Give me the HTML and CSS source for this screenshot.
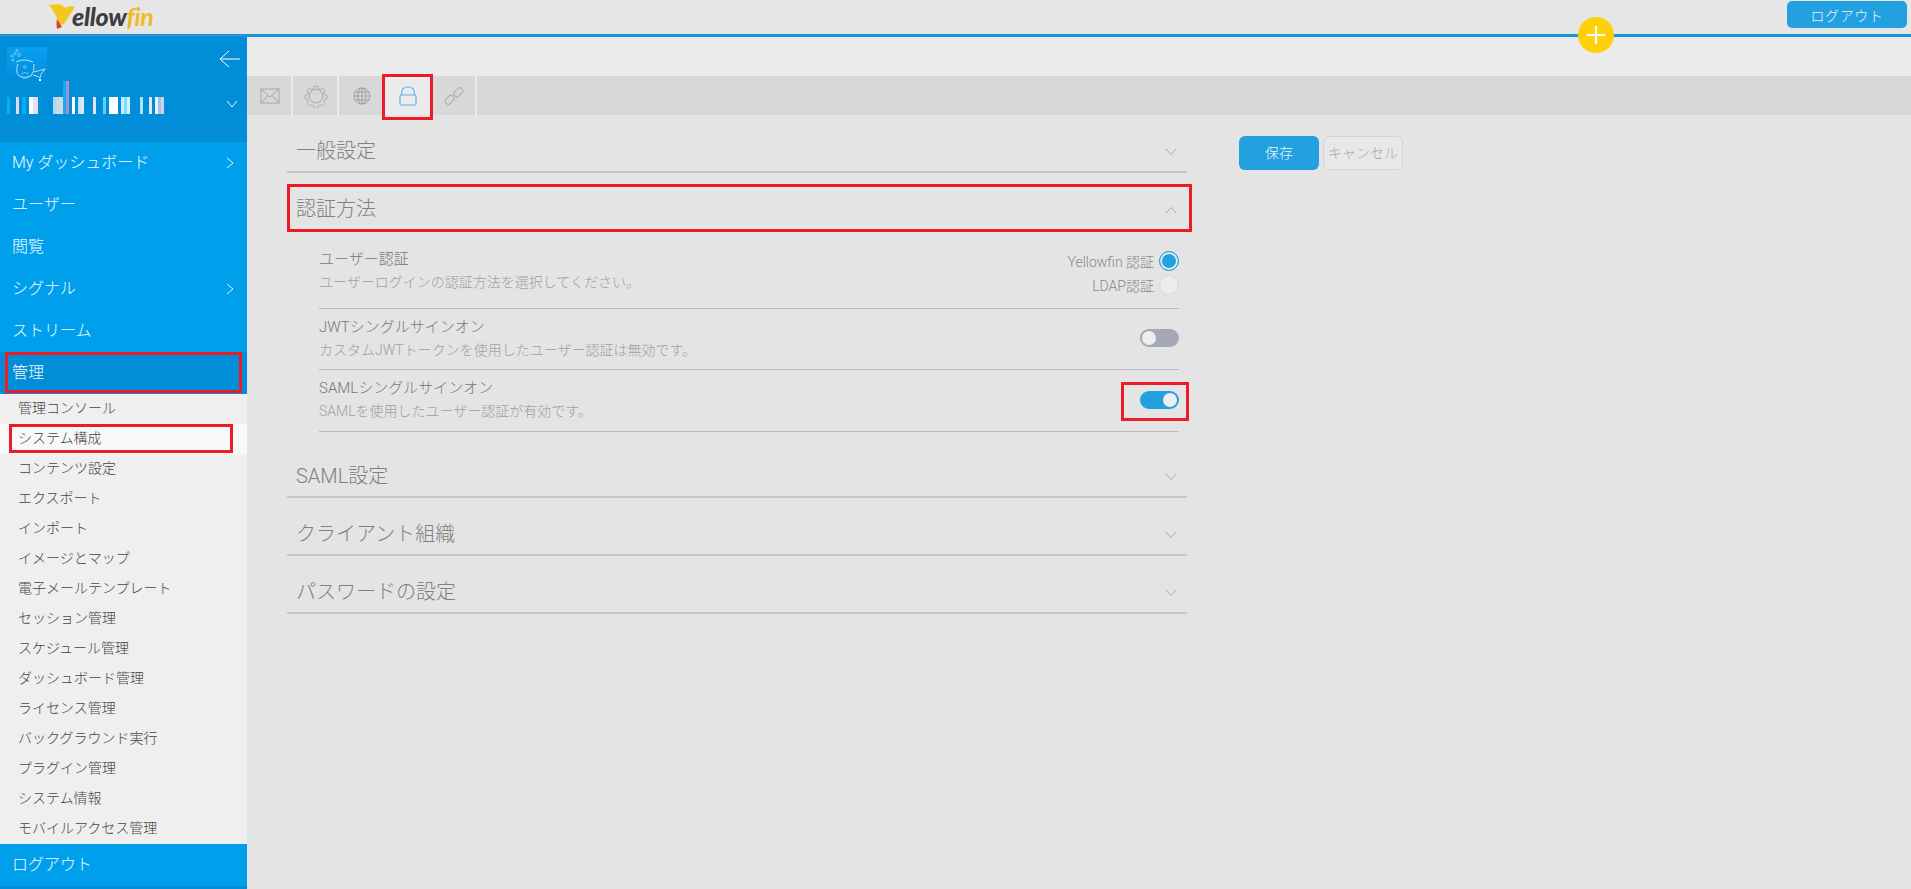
FILE: index.html
```html
<!DOCTYPE html>
<html lang="ja">
<head>
<meta charset="utf-8">
<title>システム構成</title>
<link rel="stylesheet" href="styles.css">
</head>
<body>
<header class="topbar">
  <div class="logo">
    <svg class="logo-mark" width="26" height="26" viewBox="0 0 26 26"><path fill="#f2c81e" d="M1 3 L11 2 Q15 3 17 6 Q21 3 27 5 L16 22 L11 23 Q9 13 1 3Z"/><path fill="#e2383a" d="M9 17 L14 25 L9 27 Q8 21 9 17Z"/></svg>
    <span class="logo-text">ellow<span class="logo-fin">fin</span></span>
  </div>
  <button class="logout-top">ログアウト</button>
  <div class="fab"><svg width="20" height="20" viewBox="0 0 20 20"><path d="M10 1V19M1 10H19" stroke="#fff" stroke-width="2.2"/></svg></div>
</header>
<div class="body-row">
  <aside class="sidebar">
    <div class="profile">
      <svg class="avatar" width="40" height="34" viewBox="0 0 40 34">
        <g fill="none" stroke="#9fd6fa" stroke-width=".7">
          <circle cx="10" cy="3.5" r="1.1"/><circle cx="12" cy="8" r="1.5"/><circle cx="8" cy="6.5" r="1"/><circle cx="5" cy="9" r="1.1"/><circle cx="6" cy="13" r="1"/>
          <path d="M9 15Q17 11 26 15M11 17Q8 24 12 29Q18 32 24 29Q28 24 27 17" stroke="#c4e8ff" stroke-width=".9"/>
          <path d="M27 25Q31 24 38 22Q33 27 33 31Q29 28 26 28" stroke="#c4e8ff" stroke-width=".9"/>
          <circle cx="18" cy="20" r="1.3"/><path d="M14 27Q18 24 22 27M15 31H21"/>
        </g>
        <rect x="32" y="32" width="2" height="2" fill="#fff"/>
      </svg>
      <svg class="back-arrow" width="22" height="18" viewBox="0 0 22 18"><path d="M21 9H1M10 1L1 9L10 17" fill="none" stroke="#fff" stroke-width="1"/></svg>
      <svg class="name-bars" width="170" height="33" viewBox="0 0 170 33">
        <rect x="7" y="16" width="3" height="17" fill="#00b4f0"/><rect x="16" y="16" width="3" height="17" fill="#d8dde8"/><rect x="22" y="16" width="4" height="17" fill="#00b0f0"/><rect x="29" y="16" width="4" height="17" fill="#fff"/><rect x="33" y="16" width="5" height="17" fill="#e0e3ea"/>
        <rect x="53" y="16" width="3" height="17" fill="#a8dcf5"/><rect x="56" y="16" width="3" height="17" fill="#c8d8e8"/><rect x="59" y="16" width="4" height="17" fill="#d4d8e0"/><rect x="63" y="0" width="3" height="33" fill="#0cb0f0"/><rect x="66" y="0" width="3" height="33" fill="#a890d0"/>
        <rect x="72" y="16" width="3" height="17" fill="#fff"/><rect x="78" y="16" width="3" height="17" fill="#bfe4f5"/><rect x="81" y="16" width="3" height="17" fill="#e0e8f0"/><rect x="93" y="16" width="3" height="17" fill="#e0e4ec"/><rect x="103" y="16" width="3" height="17" fill="#60d0ff"/><rect x="109" y="16" width="9" height="17" fill="#fff"/>
        <rect x="121" y="16" width="3" height="17" fill="#c8eafa"/><rect x="124" y="16" width="3" height="17" fill="#80dcff"/><rect x="127" y="16" width="3" height="17" fill="#d8f0fa"/><rect x="140" y="16" width="3" height="17" fill="#a8e4fa"/><rect x="149" y="16" width="3" height="17" fill="#e4e6ee"/><rect x="155" y="16" width="3" height="17" fill="#e8f4fc"/><rect x="158" y="16" width="3" height="17" fill="#a8c0e8"/><rect x="161" y="16" width="3" height="17" fill="#d0d4e0"/>
      </svg>
      <svg class="profile-chevron" width="12" height="8" viewBox="0 0 12 8"><path d="M1 1L6 7L11 1" fill="none" stroke="#e6f5ff" stroke-width="1"/></svg>
    </div>
    <nav class="menu">
      <a class="menu-item">My ダッシュボード<svg width="8" height="12" viewBox="0 0 8 12"><path d="M1 1L7 6L1 11" fill="none" stroke="#e6f5ff" stroke-width="1"/></svg></a>
      <a class="menu-item">ユーザー</a>
      <a class="menu-item">閲覧</a>
      <a class="menu-item">シグナル<svg width="8" height="12" viewBox="0 0 8 12"><path d="M1 1L7 6L1 11" fill="none" stroke="#e6f5ff" stroke-width="1"/></svg></a>
      <a class="menu-item">ストリーム</a>
      <a class="menu-item menu-active mark mark-admin">管理</a>
      <div class="submenu">
        <a class="sub-item">管理コンソール</a>
        <a class="sub-item sub-current mark mark-sub">システム構成</a>
        <a class="sub-item">コンテンツ設定</a>
        <a class="sub-item">エクスポート</a>
        <a class="sub-item">インポート</a>
        <a class="sub-item">イメージとマップ</a>
        <a class="sub-item">電子メールテンプレート</a>
        <a class="sub-item">セッション管理</a>
        <a class="sub-item">スケジュール管理</a>
        <a class="sub-item">ダッシュボード管理</a>
        <a class="sub-item">ライセンス管理</a>
        <a class="sub-item">バックグラウンド実行</a>
        <a class="sub-item">プラグイン管理</a>
        <a class="sub-item">システム情報</a>
        <a class="sub-item">モバイルアクセス管理</a>
      </div>
      <a class="menu-item">ログアウト</a>
    </nav>
  </aside>
  <main class="main">
    <div class="strip"></div>
    <div class="tabs">
      <div class="tab"><svg width="20" height="16" viewBox="0 0 20 16"><g fill="none" stroke="#a6a6a6" stroke-width="1"><rect x="1" y="1" width="18" height="14"/><path d="M1 1L10 9L19 1M1 15L8 7.5M19 15L12 7.5"/></g></svg></div>
      <div class="tab"><svg width="24" height="24" viewBox="0 0 24 24"><g fill="none" stroke="#a6a6a6" stroke-width="1"><circle cx="12" cy="12" r="6.8"/><path d="M10.2 1.5h3.6l.8 2.8 2.4 1 2.6-1.4 2.6 2.6-1.4 2.6 1 2.4 2.8.8v3.6l-2.8.8-1 2.4 1.4 2.6-2.6 2.6-2.6-1.4-2.4 1-.8 2.8h-3.6l-.8-2.8-2.4-1-2.6 1.4-2.6-2.6 1.4-2.6-1-2.4-2.8-.8v-3.6l2.8-.8 1-2.4-1.4-2.6 2.6-2.6 2.6 1.4 2.4-1z" transform="translate(1.6 .9) scale(.87)"/></g></svg></div>
      <div class="tab"><svg width="20" height="20" viewBox="0 0 20 20"><g fill="none" stroke="#a0a0a0" stroke-width="1"><circle cx="10" cy="10" r="8"/><ellipse cx="10" cy="10" rx="4" ry="8"/><path d="M10 2V18M2 10H18M3.2 6H16.8M3.2 14H16.8"/></g></svg></div>
      <div class="tab tab-active mark mark-tab"><svg width="18" height="20" viewBox="0 0 18 20"><g fill="none" stroke="#5ab4ea" stroke-width="1.2"><path d="M2.5 9V7.5Q2.5 1 9 1Q15.5 1 15.5 7.5V9"/><rect x="1" y="9" width="16" height="10" rx="1.5"/></g></svg></div>
      <div class="tab"><svg width="20" height="20" viewBox="0 0 20 20"><g fill="none" stroke="#b0b0b0" stroke-width="1.1"><rect x="8.5" y="1.8" width="10" height="6" rx="3" transform="rotate(-45 13.5 4.8) translate(-.4 1.6)"/><rect x="1.5" y="12.2" width="10" height="6" rx="3" transform="rotate(-45 6.5 15.2) translate(.4 -1.6)"/></g></svg></div>
    </div>
    <div class="content">
      <div class="accordion">
        <section>
          <div class="acc-head"><span>一般設定</span><svg class="chev" width="14" height="8" viewBox="0 0 14 8"><path d="M2 1L7 6.5L12 1"/></svg></div>
        </section>
        <section class="open">
          <div class="acc-head mark mark-head"><span>認証方法</span><svg class="chev" width="14" height="8" viewBox="0 0 14 8"><path d="M2 7L7 1.5L12 7"/></svg></div>
          <div class="rows">
            <div class="row row-radio">
              <div class="row-text"><div class="row-title">ユーザー認証</div><div class="row-desc">ユーザーログインの認証方法を選択してください。</div></div>
              <div class="radios">
                <label class="radio-line">Yellowfin 認証<i class="radio on"></i></label>
                <label class="radio-line">LDAP認証<i class="radio"></i></label>
              </div>
            </div>
            <div class="row">
              <div class="row-text"><div class="row-title">JWTシングルサインオン</div><div class="row-desc">カスタムJWTトークンを使用したユーザー認証は無効です。</div></div>
              <i class="toggle"></i>
            </div>
            <div class="row row-last">
              <div class="row-text"><div class="row-title">SAMLシングルサインオン</div><div class="row-desc">SAMLを使用したユーザー認証が有効です。</div></div>
              <i class="toggle toggle-on mark mark-toggle"></i>
            </div>
          </div>
        </section>
        <section>
          <div class="acc-head"><span>SAML設定</span><svg class="chev" width="14" height="8" viewBox="0 0 14 8"><path d="M2 1L7 6.5L12 1"/></svg></div>
        </section>
        <section>
          <div class="acc-head"><span>クライアント組織</span><svg class="chev" width="14" height="8" viewBox="0 0 14 8"><path d="M2 1L7 6.5L12 1"/></svg></div>
        </section>
        <section>
          <div class="acc-head"><span>パスワードの設定</span><svg class="chev" width="14" height="8" viewBox="0 0 14 8"><path d="M2 1L7 6.5L12 1"/></svg></div>
        </section>
      </div>
      <div class="actions">
        <button class="btn btn-save">保存</button>
        <button class="btn btn-cancel">キャンセル</button>
      </div>
    </div>
  </main>
</div>
</body>
</html>
```
FILE: styles.css
```css
* { box-sizing: border-box; }
html, body { margin: 0; height: 100%; overflow: hidden; }
body {
  width: 1911px;
  height: 889px;
  display: flex;
  flex-direction: column;
  background: #e4e4e4;
  font-family: Roboto, "Noto Sans CJK JP", sans-serif;
  font-weight: 300;
}
.topbar {
  position: relative;
  flex: 0 0 37px;
  display: flex;
  justify-content: space-between;
  align-items: flex-start;
  background: #e6e6e6;
  border-bottom: 3px solid #1c94d6;
  padding: 1px 4px 0 48px;
}
.logo { display: flex; align-items: flex-start; height: 32px; }
.logo-mark { overflow: visible; margin-top: 1px; margin-right: -2px; }
.logo-text {
  font-family: Lato, sans-serif;
  font-weight: 900;
  font-style: italic;
  font-size: 25px;
  line-height: 30px;
  color: #3d3d40;
  letter-spacing: -.3px;
}
.logo-fin { color: #efba1f; font-weight: 700; }
.logout-top {
  width: 120px;
  height: 27px;
  border: 0;
  border-radius: 5px;
  background: #22a0e0;
  color: #e8f4fc;
  font: 300 14px Roboto, "Noto Sans CJK JP", sans-serif;
  letter-spacing: .6px;
}
.fab {
  position: absolute;
  left: 1578px;
  top: 17px;
  width: 36px;
  height: 36px;
  border-radius: 50%;
  background: #ffd008;
  display: flex;
  align-items: center;
  justify-content: center;
  z-index: 5;
}
.body-row { flex: 1; display: flex; min-height: 0; }

/* sidebar */
.sidebar { flex: 0 0 247px; background: #018dd8; display: flex; flex-direction: column; }
.profile { position: relative; flex: 0 0 105px; background: #018dd8; }
.avatar {
  position: absolute;
  left: 7px;
  top: 10px;
  background: linear-gradient(#0a9ff2, #018dd8);
}
.back-arrow { position: absolute; left: 219px; top: 13px; }
.name-bars { position: absolute; left: 0; top: 44px; }
.profile-chevron { position: absolute; left: 226px; top: 63px; }
.menu { display: flex; flex-direction: column; }
.menu-item {
  height: 42px;
  flex: none;
  padding: 0 13px 4px 12px;
  display: flex;
  align-items: center;
  justify-content: space-between;
  background: #009fec;
  color: #f2faff;
  font-size: 16px;
  font-weight: 300;
}
.menu-item svg { margin-top: 4px; }
.menu-active { background: #018dd8; }
.submenu { display: flex; flex-direction: column; background: #efefef; }
.sub-item {
  height: 30px;
  padding: 0 0 4px 18px;
  display: flex;
  align-items: center;
  font-size: 14px;
  color: #444;
}
.sub-current { background: #f8f8f8; }

/* main */
.main { flex: 1; display: flex; flex-direction: column; min-width: 0; }
.strip { flex: 0 0 39px; background: #ebebeb; }
.tabs { flex: 0 0 39px; display: flex; background: #d8d8d8; }
.tab {
  width: 46px;
  display: flex;
  align-items: center;
  justify-content: center;
  border-right: 2px solid #ececec;
  padding-left: 2px;
}
.tab-active { background: #ebebeb; border-right: 0; padding-left: 0; }
.content { display: flex; align-items: flex-start; padding-left: 40px; }
.accordion { width: 900px; }
.acc-head {
  height: 58px;
  display: flex;
  align-items: flex-end;
  justify-content: space-between;
  padding: 0 9px 6px 9px;
  border-bottom: 2px solid #c6c6c6;
  font-size: 20px;
  line-height: 28px;
  color: #808080;
}
.chev { fill: none; stroke: #a8a8a8; stroke-width: 1; margin-bottom: 9px; }
.rows { padding: 10px 8px 8px 32px; }
.row {
  height: 61px;
  padding-top: 7px;
  display: flex;
  justify-content: space-between;
  align-items: center;
  border-bottom: 1px solid #bebebe;
}
.row-radio { height: 68px; padding-top: 0; align-items: flex-start; }
.row-radio .row-text { padding-top: 7px; }
.row-last { height: 62px; }
.row-text { align-self: flex-start; }
.row-title { font-size: 15px; line-height: 22px; color: #777; }
.row-desc { font-size: 14px; line-height: 24px; color: #a0a0a0; }
.radios { display: flex; flex-direction: column; gap: 4px; padding-top: 10px; }
.radio-line {
  display: flex;
  justify-content: flex-end;
  align-items: center;
  gap: 5px;
  height: 20px;
  font-size: 14px;
  color: #888;
}
.radio {
  width: 20px;
  height: 20px;
  border-radius: 50%;
  background: #ececec;
  border: 1px solid #d6d6d6;
}
.radio.on {
  background: #22a0e0;
  border: 1px solid #22a0e0;
  box-shadow: inset 0 0 0 2px #ececec;
}
.toggle {
  position: relative;
  width: 39px;
  height: 18px;
  border-radius: 9px;
  background: #a5a8b5;
  display: block;
  margin-bottom: 9px;
}
.toggle::before {
  content: "";
  position: absolute;
  left: 2px;
  top: 2px;
  width: 14px;
  height: 14px;
  border-radius: 50%;
  background: #eee;
}
.toggle-on { background: #22a0e0; }
.toggle-on::before { left: 23px; }
.actions { display: flex; gap: 4px; margin: 21px 0 0 52px; }
.btn {
  width: 80px;
  height: 34px;
  border-radius: 6px;
  font: 300 14px Roboto, "Noto Sans CJK JP", sans-serif;
  padding: 0 0 3px;
}
.btn-save { background: #22a0e0; border: 0; color: #eef8fd; }
.btn-cancel { background: #e8e8e8; border: 1px solid #d4d4d4; color: #a8a8a8; }

/* red annotation frames drawn over the screenshot */
.mark { position: relative; }
.mark::after {
  content: "";
  position: absolute;
  border: 3px solid #ed1c24;
  pointer-events: none;
}
.mark-admin::after { left: 5px; right: 5px; top: 0; bottom: 1px; }
.mark-sub::after { left: 9px; right: 14px; top: 0; bottom: 1px; }
.mark-tab::after { left: -3px; right: -2px; top: -2px; bottom: -5px; }
.mark-head::after { left: 0; right: -5px; top: 11px; bottom: -3px; }
.mark-toggle::after { left: -19px; right: -10px; top: -9px; bottom: -12px; }
```
